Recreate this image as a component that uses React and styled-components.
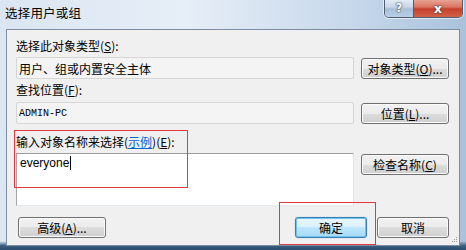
import React from "react";
import styled, { createGlobalStyle } from "styled-components";

const GlobalStyle = createGlobalStyle`
  html, body {
    margin: 0;
    padding: 0;
    background: #c9d9ea;
  }
  body {
    font-family: "Noto Sans CJK SC", "Liberation Sans", sans-serif;
    font-size: 12px;
    color: #000;
  }
`;

const Window = styled.div`
  width: 466px;
  height: 250px;
  display: flex;
  flex-direction: column;
  background: linear-gradient(90deg, #dbe6f2 0%, #e6eef7 40%, #c7d8eb 75%, #a9c2dc 100%);
  overflow: hidden;
`;

const TitleBar = styled.div`
  height: 29px;
  display: flex;
  justify-content: space-between;
  align-items: flex-start;
  padding-left: 5px;
  padding-right: 3px;
  box-sizing: border-box;
`;

const Title = styled.div`
  margin-top: 4px;
  font-size: 12.5px;
  line-height: 17px;
  color: #000;
  letter-spacing: 0.2px;
`;

const Caption = styled.div`
  display: flex;
  margin-top: -1px;
  border: 1px solid #4f5f72;
  border-top: none;
  border-radius: 0 0 5px 5px;
  overflow: hidden;
  height: 18px;
  box-shadow: 0 0 0 1px rgba(255, 255, 255, 0.6);
`;

const CaptionButton = styled.div`
  width: ${(p) => p.$w}px;
  height: 18px;
  display: flex;
  align-items: center;
  justify-content: center;
  font-family: "DejaVu Sans", sans-serif;
  font-weight: bold;
  font-size: ${(p) => (p.$close ? 13 : 12)}px;
  color: #fff;
  text-shadow: 0 0 2px #233, 0 0 1px #233;
  background: ${(p) =>
    p.$close
      ? "linear-gradient(#e9a99b 0%, #d9735f 45%, #c4412a 55%, #d4624a 100%)"
      : "linear-gradient(#e6eef7 0%, #c7d6e8 45%, #a9bfd8 55%, #b9cfe6 100%)"};
  border-left: ${(p) => (p.$close ? "1px solid #4f5f72" : "none")};
  box-sizing: border-box;
`;

const Frame = styled.div`
  flex: 1;
  display: flex;
  padding: 0 6px 4px 6px;
  background: linear-gradient(#00000000 0%, #00000000 96%, #3a5f82 98%, #2b4d6e 100%);
`;

const Panel = styled.div`
  position: relative;
  flex: 1;
  display: flex;
  flex-direction: column;
  background: #f0f0f0;
  border: 1px solid #7d8c9e;
  padding: 9px 10px 7px 9px;
`;

const Label = styled.div`
  height: 14px;
  line-height: 14px;
  margin-top: ${(p) => p.$mt || 0}px;
  margin-bottom: ${(p) => p.$mb || 4}px;
  white-space: nowrap;
`;

const Row = styled.div`
  display: grid;
  grid-template-columns: 338px 88px;
  column-gap: 7px;
  align-items: ${(p) => p.$align || "center"};
`;

const ReadField = styled.div`
  height: 22px;
  box-sizing: border-box;
  border: 1px solid #d6d6d6;
  border-radius: 2px;
  background: #f4f4f4;
  padding-left: 2px;
  display: flex;
  align-items: center;
  white-space: nowrap;
  font-family: ${(p) =>
    p.$mono ? '"Liberation Mono", monospace' : '"Noto Sans CJK SC", sans-serif'};
  font-size: ${(p) => (p.$mono ? "10px" : "12px")};
`;

const TextBox = styled.div`
  height: 53px;
  box-sizing: border-box;
  border: 1px solid;
  border-color: #9a9c9f #e2e3ea #e3e9ef #a5a7ab;
  background: #fff;
  padding: 2px 3px;
  font-family: "Liberation Sans", sans-serif;
  font-size: 12px;
  line-height: 14px;
  display: flex;
  align-items: flex-start;
`;

const Caret = styled.span`
  display: inline-block;
  width: 1px;
  height: 14px;
  background: #000;
  margin-left: 1px;
`;

const Button = styled.button`
  height: 21px;
  width: ${(p) => p.$w || 88}px;
  margin-top: ${(p) => p.$mt || 0}px;
  margin-left: ${(p) => p.$ml || 0}px;
  padding: 0;
  font-family: "Noto Sans CJK SC", sans-serif;
  font-size: 12px;
  color: #000;
  border-radius: 3px;
  white-space: nowrap;
  border: 1px solid ${(p) => (p.$primary ? "#3c7fb1" : "#707070")};
  background: ${(p) =>
    p.$primary
      ? "linear-gradient(#eaf6fd 0%, #d9f0fc 50%, #bee6fd 50%, #a7d9f5 100%)"
      : "linear-gradient(#f2f2f2 0%, #ebebeb 50%, #dddddd 50%, #cfcfcf 100%)"};
  box-shadow: ${(p) =>
    p.$primary
      ? "inset 0 0 0 1px #6cc3ee, 0 0 1px #5aa7de"
      : "inset 0 0 0 1px #fbfbfb"};
`;

const BottomRow = styled.div`
  margin-top: 11px;
  display: flex;
  align-items: center;
`;

const RightButtons = styled.div`
  margin-left: auto;
  display: flex;
  gap: 10px;
`;

const Link = styled.span`
  color: #0066cc;
  text-decoration: underline;
`;

const Marker = styled.div`
  position: absolute;
  left: ${(p) => p.$x}px;
  top: ${(p) => p.$y}px;
  width: ${(p) => p.$w}px;
  height: ${(p) => p.$h}px;
  border: 1px solid #e0393e;
  box-sizing: border-box;
  pointer-events: none;
`;

const Grip = styled.svg`
  position: absolute;
  right: 1px;
  bottom: 1px;
`;

export default function App() {
  return (
    <>
      <GlobalStyle />
      <Window>
        <TitleBar>
          <Title>选择用户或组</Title>
          <Caption>
            <CaptionButton $w={28}>?</CaptionButton>
            <CaptionButton $w={49} $close>
              x
            </CaptionButton>
          </Caption>
        </TitleBar>
        <Frame>
          <Panel>
            <Label>
              选择此对象类型(<u>S</u>):
            </Label>
            <Row>
              <ReadField>用户、组或内置安全主体</ReadField>
              <Button>
                对象类型(<u>O</u>)...
              </Button>
            </Row>
            <Label $mt={4} $mb={5}>
              查找位置(<u>F</u>):
            </Label>
            <Row>
              <ReadField $mono>ADMIN-PC</ReadField>
              <Button>
                位置(<u>L</u>)...
              </Button>
            </Row>
            <Label $mt={11}>
              输入对象名称来选择(<Link>示例</Link>)(<u>E</u>):
            </Label>
            <Row $align="start">
              <TextBox>
                everyone
                <Caret />
              </TextBox>
              <Button $mt={1}>
                检查名称(<u>C</u>)
              </Button>
            </Row>
            <BottomRow>
              <Button $ml={2}>
                高级(<u>A</u>)...
              </Button>
              <RightButtons>
                <Button $w={72} $primary>
                  确定
                </Button>
                <Button $w={72}>取消</Button>
              </RightButtons>
            </BottomRow>
            <Marker $x={7} $y={100} $w={174} $h={58} />
            <Marker $x={272} $y={172} $w={97} $h={43} />
            <Grip width="7" height="7" viewBox="0 0 7 7">
              <g fill="#a0a0a0">
                <rect x="5" y="0" width="1" height="1" />
                <rect x="3" y="2" width="1" height="1" />
                <rect x="5" y="2" width="1" height="1" />
                <rect x="1" y="4" width="1" height="1" />
                <rect x="3" y="4" width="1" height="1" />
                <rect x="5" y="4" width="1" height="1" />
              </g>
            </Grip>
          </Panel>
        </Frame>
      </Window>
    </>
  );
}
